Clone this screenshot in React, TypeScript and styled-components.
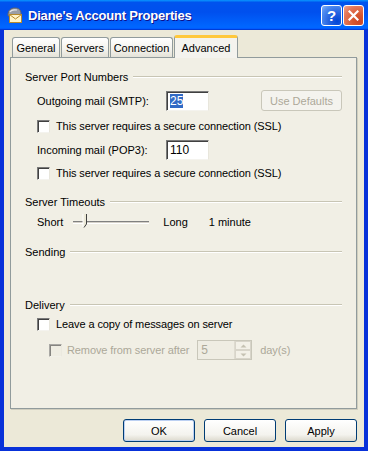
import React from "react";
import styled, { createGlobalStyle } from "styled-components";

const GlobalStyle = createGlobalStyle`
  html, body {
    margin: 0;
    padding: 0;
    background: #ece9d8;
  }
  body {
    font-family: "Liberation Sans", Arial, sans-serif;
    font-size: 11px;
    color: #000;
  }
  * {
    box-sizing: border-box;
  }
`;

const Window = styled.div`
  width: 368px;
  height: 451px;
  display: flex;
  flex-direction: column;
  background: #0831d9;
`;

const TitleBar = styled.div`
  height: 30px;
  flex: none;
  display: flex;
  align-items: center;
  padding: 0 4px 0 6px;
  background: linear-gradient(
    180deg,
    #0997ff,
    #0053ee 8%,
    #0050ee 40%,
    #06f 88%,
    #06f 93%,
    #005bff 95%,
    #003dd7 96%,
    #003dd7
  );
`;

const TitleText = styled.span`
  margin-left: 5px;
  flex: 1;
  font-weight: bold;
  font-size: 13px;
  letter-spacing: -0.2px;
  color: #fff;
  text-shadow: 1px 1px #0f1089;
`;

const CaptionButton = styled.div<{ $close?: boolean }>`
  width: 21px;
  height: 21px;
  margin-left: 1px;
  border: 1px solid #fff;
  border-radius: 3px;
  display: flex;
  align-items: center;
  justify-content: center;
  color: #fff;
  font-weight: bold;
  font-size: 15px;
  background: ${(p) =>
    p.$close
      ? "radial-gradient(circle at 80% 80%, #cc4627 0%, #d6572f 30%, #e5775a 70%, #f0a590 100%)"
      : "radial-gradient(circle at 80% 80%, #0044d6 0%, #2663e0 40%, #4d8bf0 75%, #86b4f8 100%)"};
`;

const Frame = styled.div`
  flex: 1;
  display: flex;
  flex-direction: column;
  border: 4px solid #0831d9;
  border-top: none;
  background: #ece9d8;
  padding: 5px 7px 5px 6px;
`;

const TabStrip = styled.div`
  display: flex;
  align-items: flex-end;
  gap: 1px;
  padding-left: 2px;
  height: 22px;
`;

const Tab = styled.div<{ $active?: boolean; $w: number }>`
  width: ${(p) => p.$w}px;
  height: ${(p) => (p.$active ? 23 : 20)}px;
  margin-bottom: ${(p) => (p.$active ? -1 : 0)}px;
  position: relative;
  z-index: ${(p) => (p.$active ? 1 : 0)};
  display: flex;
  align-items: center;
  justify-content: center;
  border: 1px solid #919b9c;
  border-bottom: none;
  border-radius: 3px 3px 0 0;
  padding-top: ${(p) => (p.$active ? 0 : 1)}px;
  background: ${(p) =>
    p.$active ? "#f4f3ee" : "linear-gradient(180deg, #fff, #f3f2ec 60%, #e4e2d8)"};
  border-top: ${(p) => (p.$active ? "3px solid #ffc83c" : "1px solid #919b9c")};
  box-shadow: ${(p) => (p.$active ? "inset 0 -1px 0 #f4f3ee" : "none")};
`;

const Panel = styled.div`
  height: 352px;
  border: 1px solid #919b9c;
  box-shadow: 1px 1px 0 #d0cebf;
  background: #f1efe5;
  padding: 12px 14px 0 14px;
  display: flex;
  flex-direction: column;
`;

const GroupHeader = styled.div<{ $mt: number }>`
  display: flex;
  align-items: center;
  gap: 5px;
  height: 13px;
  margin-top: ${(p) => p.$mt}px;
`;

const GroupLine = styled.div`
  flex: 1;
  height: 2px;
  border-top: 1px solid #c8c5b4;
  border-bottom: 1px solid #fff;
`;

const Row = styled.div<{ $mt: number; $h: number; $indent?: number }>`
  display: flex;
  align-items: center;
  height: ${(p) => p.$h}px;
  margin-top: ${(p) => p.$mt}px;
  padding-left: ${(p) => p.$indent ?? 12}px;
`;

const FieldLabel = styled.span`
  width: 129px;
`;

const sunken = `
  border: 1px solid;
  border-color: #7a7a7a #e8e6dc #f4f3ee #7a7a7a;
  box-shadow: inset 1px 1px 0 #404040;
`;

const TextBox = styled.div<{ $w: number; $disabled?: boolean }>`
  width: ${(p) => p.$w}px;
  height: 20px;
  ${sunken}
  background: ${(p) => (p.$disabled ? "#efede3" : "#fff")};
  color: ${(p) => (p.$disabled ? "#aca899" : "#000")};
  display: flex;
  align-items: center;
  padding-left: 3px;
  font-size: 12px;
`;

const Selected = styled.span`
  background: #316ac5;
  color: #fff;
`;

const PushButton = styled.button<{ $w: number; $default?: boolean }>`
  width: ${(p) => p.$w}px;
  height: 23px;
  font-family: inherit;
  font-size: 11px;
  color: #000;
  border: 1px solid #003c74;
  border-radius: 3px;
  background: linear-gradient(180deg, #fff, #f4f3ee 70%, #dcd9cd);
  box-shadow: ${(p) => (p.$default ? "inset 0 0 0 1px #bcd0f2" : "none")};
  padding: 0;

  &:disabled {
    color: #aca899;
    border-color: #c9c7ba;
    background: #f4f3ee;
    box-shadow: none;
  }
`;

const DefaultsButton = styled(PushButton)`
  height: 21px;
  margin-left: auto;
`;

const Check = styled.span<{ $disabled?: boolean }>`
  width: 13px;
  height: 13px;
  flex: none;
  ${sunken}
  background: ${(p) => (p.$disabled ? "#efede3" : "#fff")};
  opacity: ${(p) => (p.$disabled ? 0.6 : 1)};
`;

const CheckText = styled.span<{ $gap?: number; $disabled?: boolean }>`
  margin-left: ${(p) => p.$gap ?? 6}px;
  color: ${(p) => (p.$disabled ? "#aca899" : "#000")};
  letter-spacing: -0.1px;
`;

const Slider = styled.div`
  width: 76px;
  height: 20px;
  margin-left: 10px;
  position: relative;
  display: flex;
  align-items: center;
`;

const SliderTrack = styled.div`
  width: 100%;
  height: 3px;
  border-top: 1px solid #808080;
  border-bottom: 1px solid #fff;
  background: #d4d0c8;
`;

const SliderThumb = styled.svg`
  position: absolute;
  left: 9px;
  top: 2px;
`;

const Spacer = styled.span<{ $w: number }>`
  margin-left: ${(p) => p.$w}px;
`;

const Spinner = styled.div`
  width: 55px;
  height: 20px;
  margin-left: 8px;
  ${sunken}
  box-shadow: none;
  border-color: #c9c7ba;
  background: #efede3;
  color: #aca899;
  display: flex;
  align-items: center;
  padding-left: 3px;
  font-size: 12px;
`;

const SpinButtons = styled.div`
  margin-left: auto;
  width: 17px;
  height: 100%;
  display: flex;
  flex-direction: column;
  border-left: 1px solid #dedbd0;
`;

const SpinHalf = styled.div`
  flex: 1;
  display: flex;
  align-items: center;
  justify-content: center;
  border: 1px solid #d8d5ca;
  background: #f3f1e8;
`;

const ButtonRow = styled.div`
  margin-top: 10px;
  display: flex;
  justify-content: flex-end;
  gap: 9px;
`;

const MailIcon = () => (
  <svg width="17" height="16" viewBox="0 0 17 16">
    <path d="M2 8 C2 3 5 1 9 1 C13 1 15 3 15 7 L15 9 L2 9 Z" fill="#9a9ea6" stroke="#5e636b" strokeWidth="1" />
    <path d="M4 5 C5 3 8 2.5 11 3" stroke="#e4e6ea" strokeWidth="1.2" fill="none" />
    <rect x="3.5" y="7.5" width="12" height="8" fill="#fff4c8" stroke="#b78a2c" />
    <path d="M3.5 7.5 L9.5 12 L15.5 7.5" stroke="#b78a2c" fill="none" />
  </svg>
);

const CloseGlyph = () => (
  <svg width="11" height="11" viewBox="0 0 11 11">
    <path d="M1.5 1.5 L9.5 9.5 M9.5 1.5 L1.5 9.5" stroke="#fff" strokeWidth="2.2" strokeLinecap="square" />
  </svg>
);

const Arrow = ({ up }: { up?: boolean }) => (
  <svg width="7" height="4" viewBox="0 0 7 4">
    <path d={up ? "M0.5 3.5 L3.5 0.5 L6.5 3.5 Z" : "M0.5 0.5 L3.5 3.5 L6.5 0.5 Z"} fill="#c5c2b2" />
  </svg>
);

const App: React.FC = () => {
  return (
    <>
      <GlobalStyle />
      <Window>
        <TitleBar>
          <MailIcon />
          <TitleText>Diane's Account Properties</TitleText>
          <CaptionButton>?</CaptionButton>
          <CaptionButton $close>
            <CloseGlyph />
          </CaptionButton>
        </TitleBar>
        <Frame>
          <TabStrip>
            <Tab $w={48}>General</Tab>
            <Tab $w={48}>Servers</Tab>
            <Tab $w={63}>Connection</Tab>
            <Tab $w={64} $active>
              Advanced
            </Tab>
          </TabStrip>
          <Panel>
            <GroupHeader $mt={0}>
              <span>Server Port Numbers</span>
              <GroupLine />
            </GroupHeader>
            <Row $mt={7} $h={21}>
              <FieldLabel>Outgoing mail (SMTP):</FieldLabel>
              <TextBox $w={43}>
                <Selected>25</Selected>
              </TextBox>
              <DefaultsButton $w={81} disabled>
                Use Defaults
              </DefaultsButton>
            </Row>
            <Row $mt={8} $h={14}>
              <Check />
              <CheckText>This server requires a secure connection (SSL)</CheckText>
            </Row>
            <Row $mt={7} $h={20}>
              <FieldLabel>Incoming mail (POP3):</FieldLabel>
              <TextBox $w={43}>110</TextBox>
            </Row>
            <Row $mt={6} $h={14}>
              <Check />
              <CheckText>This server requires a secure connection (SSL)</CheckText>
            </Row>

            <GroupHeader $mt={15}>
              <span>Server Timeouts</span>
              <GroupLine />
            </GroupHeader>
            <Row $mt={4} $h={20}>
              <span>Short</span>
              <Slider>
                <SliderTrack />
                <SliderThumb width="6" height="14" viewBox="0 0 6 14">
                  <path d="M1 0 L4 0 L4 10 L2 13 L1 13 Z" fill="#ece9d8" />
                  <path d="M1 0 L1 13" stroke="#fff" strokeWidth="1" />
                  <path d="M4.5 0 L4.5 10 L2 13.5" stroke="#404040" strokeWidth="1" fill="none" />
                </SliderThumb>
              </Slider>
              <Spacer $w={14}>Long</Spacer>
              <Spacer $w={21}>1 minute</Spacer>
            </Row>

            <GroupHeader $mt={13}>
              <span>Sending</span>
              <GroupLine />
            </GroupHeader>

            <GroupHeader $mt={40}>
              <span>Delivery</span>
              <GroupLine />
            </GroupHeader>
            <Row $mt={6} $h={14}>
              <Check />
              <CheckText>Leave a copy of messages on server</CheckText>
            </Row>
            <Row $mt={9} $h={20} $indent={24}>
              <Check $disabled />
              <CheckText $gap={5} $disabled>
                Remove from server after
              </CheckText>
              <Spinner>
                5
                <SpinButtons>
                  <SpinHalf>
                    <Arrow up />
                  </SpinHalf>
                  <SpinHalf>
                    <Arrow />
                  </SpinHalf>
                </SpinButtons>
              </Spinner>
              <CheckText $gap={8} $disabled>
                day(s)
              </CheckText>
            </Row>
          </Panel>
          <ButtonRow>
            <PushButton $w={72} $default>
              OK
            </PushButton>
            <PushButton $w={72}>Cancel</PushButton>
            <PushButton $w={72}>Apply</PushButton>
          </ButtonRow>
        </Frame>
      </Window>
    </>
  );
};

export default App;
